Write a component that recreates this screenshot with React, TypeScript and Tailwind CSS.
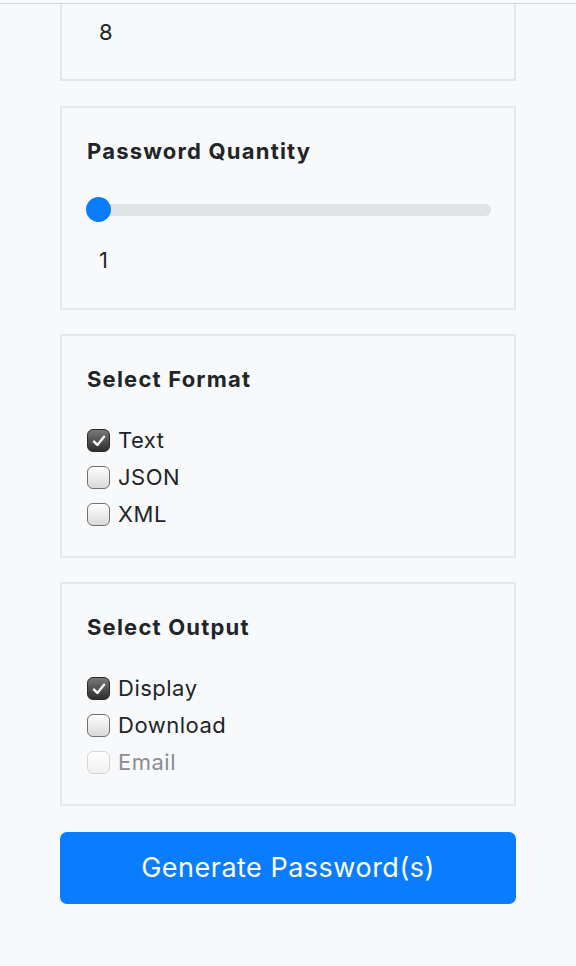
import { useState } from "react";

type Opt = { label: string; checked: boolean; disabled?: boolean };

const Box = ({ checked, disabled }: { checked: boolean; disabled?: boolean }) => {
  if (checked) {
    return (
      <span className="flex h-[23px] w-[23px] shrink-0 items-center justify-center rounded-[6px] border border-[#2a2a2a] bg-gradient-to-b from-[#7a7a7a] to-[#2e2e2e]">
        <svg viewBox="0 0 16 16" className="h-[16px] w-[16px]">
          <path d="M3 8.6 L6.4 12 L13 3.8" fill="none" stroke="#fff" strokeWidth="2.4" strokeLinecap="round" strokeLinejoin="round" />
        </svg>
      </span>
    );
  }
  return (
    <span
      className={
        disabled
          ? "h-[23px] w-[23px] shrink-0 rounded-[6px] border border-[#d6d6d6] bg-gradient-to-b from-[#ffffff] to-[#f0f0f0]"
          : "h-[23px] w-[23px] shrink-0 rounded-[6px] border border-[#6f6f6f] bg-gradient-to-b from-[#ffffff] to-[#d9d9d9]"
      }
    />
  );
};

const CheckGroup = ({ title, options }: { title: string; options: Opt[] }) => {
  const [opts, setOpts] = useState(options);
  return (
    <div className="mt-[24px] border-2 border-[#e4e6e9] px-[25px] pb-[23px] pt-[30px]">
      <h2 className="text-[22px] font-bold leading-[26px] tracking-[1.2px] text-[#212529]">{title}</h2>
      <div className="mt-[30px] flex flex-col">
        {opts.map((o, i) => (
          <label
            key={o.label}
            className="flex h-[37px] items-center gap-[8px]"
            onClick={() =>
              !o.disabled &&
              setOpts(opts.map((x, j) => (j === i ? { ...x, checked: !x.checked } : x)))
            }
          >
            <Box checked={o.checked} disabled={o.disabled} />
            <span
              className={
                o.disabled
                  ? "text-[22px] tracking-[0.5px] text-[#8a8d91]"
                  : "text-[22px] tracking-[0.5px] text-[#212529]"
              }
            >
              {o.label}
            </span>
          </label>
        ))}
      </div>
    </div>
  );
};

export default function App() {
  return (
    <div className="min-h-[966px] bg-[#f8f9fa] font-['Inter','Liberation_Sans',sans-serif] text-[#212529]">
      <div className="h-[3px]" />
      <div className="h-px bg-[#d4d6d9]" />
      <div className="mx-auto w-[456px] pb-[60px]">
        <div className="border-2 border-t-0 border-[#e4e6e9] px-[25px] pb-[34px] pt-[15px]">
          <div className="pl-[12px] text-[22px] leading-[26px]">8</div>
        </div>

        <div className="mt-[25px] border-2 border-[#e4e6e9] pb-[35px] pl-[24px] pr-[23px] pt-[30px]">
          <h2 className="pl-px text-[22px] font-bold leading-[26px] tracking-[1.2px]">Password Quantity</h2>
          <div className="relative mt-[33px] flex h-[26px] items-center">
            <div className="h-[12px] w-full rounded-full bg-[#e1e3e6]" />
            <div className="absolute left-0 top-0 h-[25px] w-[25px] rounded-full bg-[#0a7cff]" />
          </div>
          <div className="mt-[24px] pl-[13px] text-[22px] leading-[26px]">1</div>
        </div>

        <CheckGroup
          title="Select Format"
          options={[
            { label: "Text", checked: true },
            { label: "JSON", checked: false },
            { label: "XML", checked: false },
          ]}
        />

        <CheckGroup
          title="Select Output"
          options={[
            { label: "Display", checked: true },
            { label: "Download", checked: false },
            { label: "Email", checked: false, disabled: true },
          ]}
        />

        <button className="mt-[26px] flex h-[72px] w-full items-center justify-center rounded-[7px] bg-[#0a7cff] text-[27px] tracking-[0.5px] text-white">
          Generate Password(s)
        </button>
      </div>
    </div>
  );
}
